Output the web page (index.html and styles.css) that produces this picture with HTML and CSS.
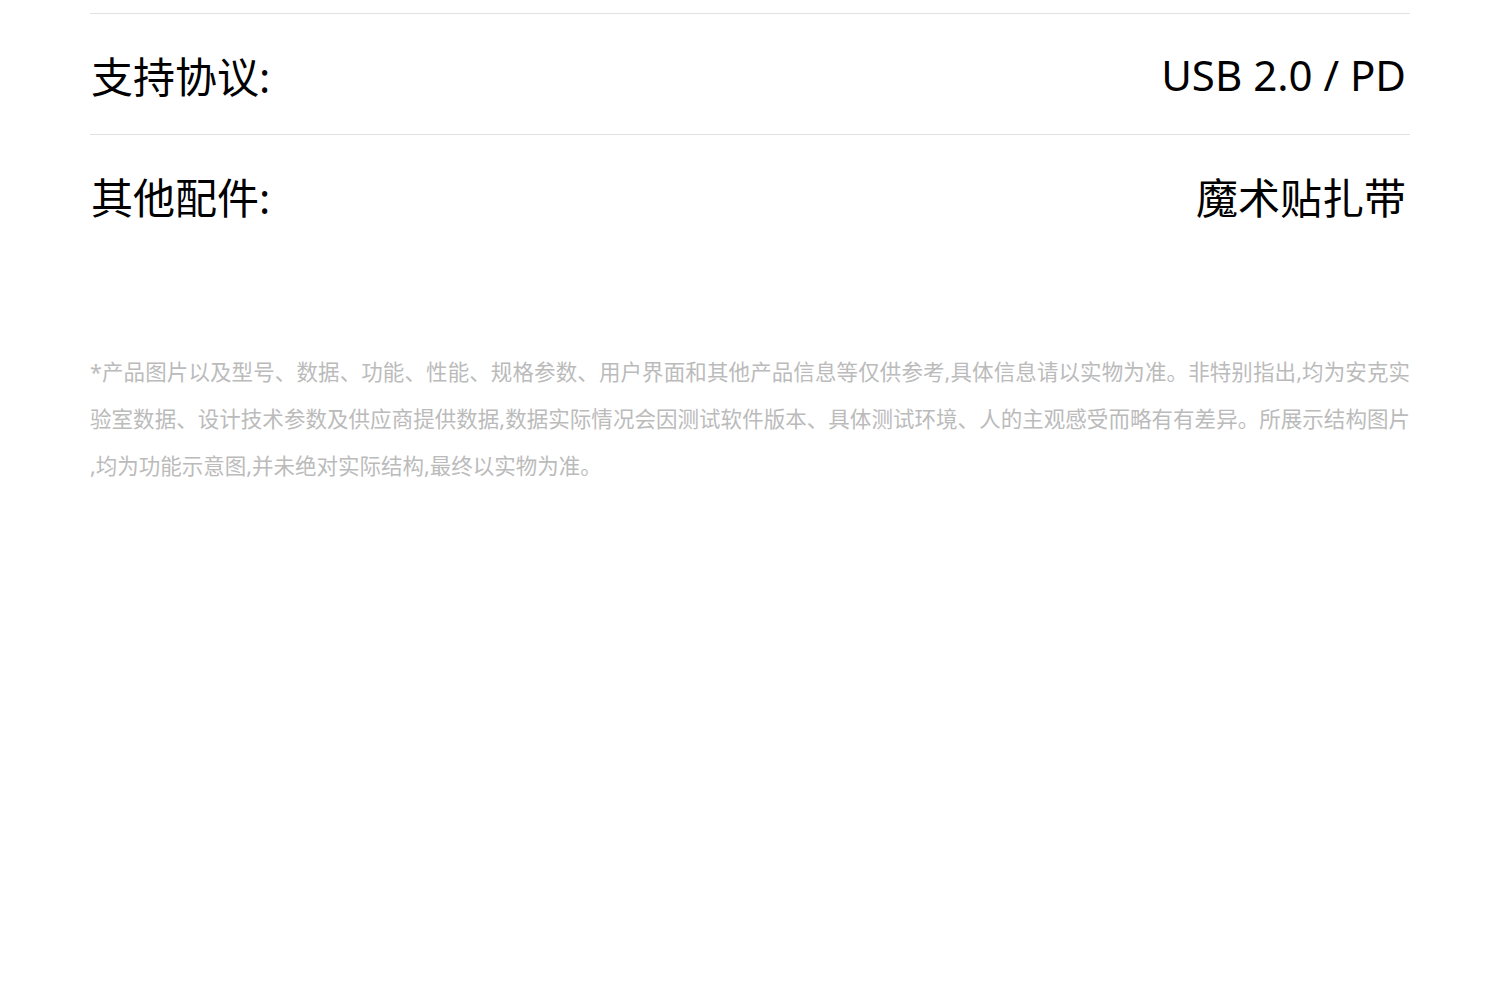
FILE: index.html
```html
<!DOCTYPE html>
<html lang="zh-CN">
<head>
  <meta charset="UTF-8">
  <title>产品参数</title>
  <link rel="stylesheet" href="styles.css">
</head>
<body>

<div class="specs">
  <div class="spec-row">
    <span class="spec-label">支持协议:</span>
    <span class="spec-value">USB 2.0 / PD</span>
  </div>
  <div class="spec-row">
    <span class="spec-label">其他配件:</span>
    <span class="spec-value">魔术贴扎带</span>
  </div>

  <p class="note">*产品图片以及型号、数据、功能、性能、规格参数、用户界面和其他产品信息等仅供参考,具体信息请以实物为准。非特别指出,均为安克实验室数据、设计技术参数及供应商提供数据,数据实际情况会因测试软件版本、具体测试环境、人的主观感受而略有有差异。所展示结构图片,均为功能示意图,并未绝对实际结构,最终以实物为准。</p>
</div>

</body>
</html>
```

FILE: styles.css
```css
body {
  margin: 0;
  background-color: #fff;
  font-family: "Noto Sans", "Noto Sans CJK SC", sans-serif;
  color: #000;
}

.specs {
  width: 1320px;
  margin: 13px auto 0;
}

.spec-row {
  display: flex;
  justify-content: space-between;
  align-items: center;
  height: 120px;
  border-top: 1px solid #e2e2e2;
  font-size: 42px;
}

.spec-label {
  padding-left: 1px;
}

.spec-value {
  padding-right: 4px;
}

.note {
  margin: 93px 0 0;
  font-size: 21.5px;
  line-height: 47px;
  color: #bbbbbb;
  text-align: justify;
  line-break: anywhere;
}
```
